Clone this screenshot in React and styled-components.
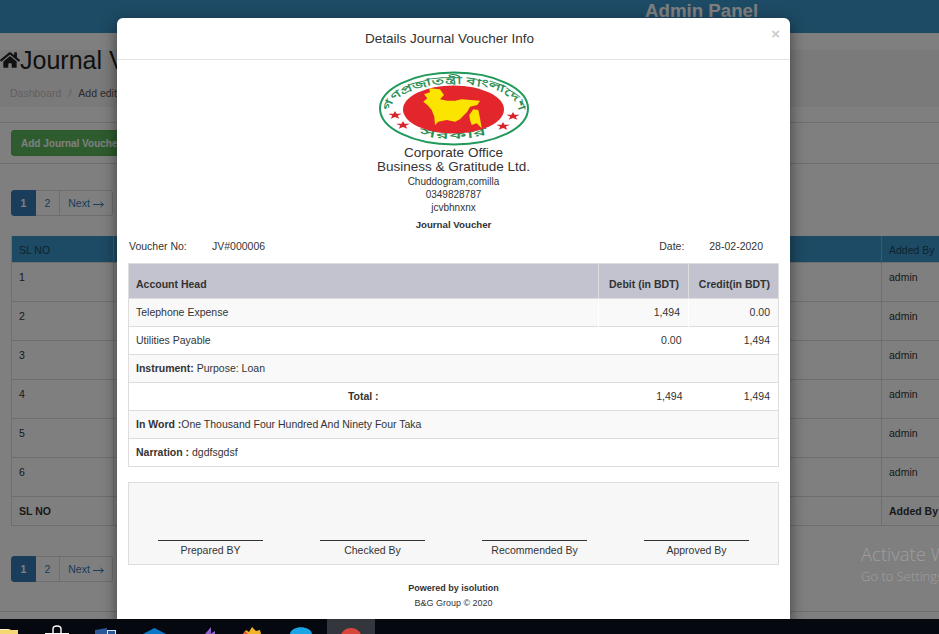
import React from 'react'
import styled, { createGlobalStyle } from 'styled-components'
import { FaHome } from 'react-icons/fa'

const GlobalStyle = createGlobalStyle`
  html, body {
    margin: 0;
    padding: 0;
    background: #fff;
    overflow: hidden;
  }
  * {
    box-sizing: border-box;
  }
`

const Screen = styled.div`
  width: 939px;
  height: 634px;
  display: flex;
  flex-direction: column;
  overflow: hidden;
  font-family: 'Liberation Sans', Arial, sans-serif;
  color: #333;
`
const Viewport = styled.div`
  position: relative;
  flex: 1;
  min-height: 0;
  overflow: hidden;
`
const Page = styled.div`
  width: 100%;
  height: 100%;
  display: flex;
  flex-direction: column;
  background: #fff;
`
const TopBar = styled.header`
  height: 33px;
  flex: none;
  background: #3a95c8;
  padding-left: 645px;
  overflow: hidden;
`
const BrandText = styled.div`
  font-size: 18.7px;
  font-weight: 700;
  line-height: 22px;
  color: #fff;
`
const Strip = styled.div`
  height: 17px;
  flex: none;
  background: #fff;
`
const TitleBand = styled.section`
  height: 57px;
  flex: none;
  background: #f5f5f5;
`
const PageTitle = styled.h1`
  margin: 0;
  display: flex;
  align-items: center;
  font-size: 25px;
  font-weight: 400;
  line-height: 20px;
  height: 20px;
  color: #222;
  white-space: nowrap;
`
const Crumbs = styled.div`
  display: flex;
  gap: 7px;
  margin: 16px 0 0 10px;
  font-size: 10.5px;
  line-height: 14px;
  color: #555;
  white-space: nowrap;
`
const CrumbLink = styled.span`
  color: #c9bdbd;
`
const ActionBar = styled.div`
  height: 42px;
  flex: none;
  margin-top: 15px;
  border-top: 1px solid #ddd;
  border-bottom: 1px solid #ddd;
  padding: 7px 11px 0;
`
const GreenButton = styled.button`
  height: 26px;
  width: 130px;
  padding: 0 9px;
  text-align: left;
  border: 1px solid #58b158;
  border-radius: 3px;
  background: #5cb85c;
  color: #fff;
  font-family: inherit;
  font-size: 10px;
  font-weight: 700;
  white-space: nowrap;
`
const Pager = styled.nav`
  display: flex;
  margin: ${(props) => props.$margin};
  padding-left: 11px;
  height: 26px;
  flex: none;
`
const PageLink = styled.span`
  width: ${(props) => props.$width}px;
  display: flex;
  align-items: center;
  justify-content: center;
  gap: 3px;
  font-size: 10.5px;
  font-weight: ${(props) => (props.$active ? 700 : 400)};
  color: ${(props) => (props.$active ? '#fff' : '#337ab7')};
  background: ${(props) => (props.$active ? '#337ab7' : '#fff')};
  border: 1px solid ${(props) => (props.$active ? '#337ab7' : '#ddd')};
  border-left-width: ${(props) => (props.$active ? 1 : 0)}px;
  border-radius: ${(props) => props.$radius || '0'};
`
const Arrow = styled.svg`
  width: 11px;
  height: 7px;
  margin-top: 2px;
`
const DataTable = styled.div`
  margin-left: 11px;
  width: 960px;
  flex: none;
  border-left: 1px solid #ddd;
`
const DataRow = styled.div`
  display: grid;
  grid-template-columns: 101px 1fr 90px;
  height: ${(props) => props.$height}px;
  background: ${(props) => (props.$head ? '#3a95c8' : 'transparent')};
  color: ${(props) => (props.$head ? '#1c4660' : '#333')};
  border-bottom: 1px solid #ddd;
  font-size: 10.5px;
  font-weight: ${(props) => (props.$bold ? 700 : 400)};
`
const DataCell = styled.div`
  padding: 8px 7px;
  border-left: 1px solid ${(props) => (props.$head ? '#76b6da' : '#ddd')};
  &:first-child {
    border-left: 0;
  }
`
const Activation = styled.div`
  position: absolute;
  left: 861px;
  top: 542px;
  width: 260px;
  font-family: 'Open Sans', sans-serif;
  font-weight: 300;
  color: rgba(255, 255, 255, 0.25);
  white-space: nowrap;
  z-index: 3;
`
const ActivationTitle = styled.div`
  font-size: 18.5px;
  line-height: 23px;
`
const ActivationHint = styled.div`
  font-size: 13px;
  line-height: 22px;
`
const BottomRule = styled.div`
  margin-top: 29px;
  border-top: 1px solid #ddd;
`
const Backdrop = styled.div`
  position: absolute;
  inset: 0;
  background: rgba(0, 0, 0, 0.5);
  z-index: 1;
`
const Modal = styled.div`
  position: absolute;
  left: 117px;
  top: 18px;
  width: 673px;
  height: 620px;
  background: #fff;
  border-radius: 6px;
  box-shadow: 0 5px 15px rgba(0, 0, 0, 0.5);
  z-index: 2;
`
const ModalHeader = styled.div`
  position: relative;
  height: 42px;
  padding-right: 8px;
  border-bottom: 1px solid #e5e5e5;
  display: flex;
  align-items: center;
  justify-content: center;
`
const ModalTitle = styled.h4`
  margin: 0;
  font-size: 13.5px;
  font-weight: 400;
  color: #333;
`
const Close = styled.span`
  position: absolute;
  right: 10px;
  top: 7px;
  font-size: 15px;
  font-weight: 700;
  line-height: 18px;
  color: #ccc;
`
const ModalBody = styled.div`
  padding: 10px 11px 0;
`
const Letterhead = styled.div`
  display: flex;
  flex-direction: column;
  align-items: center;
`
const Logo = styled.svg`
  display: block;
  width: 152px;
  height: 76px;
`
const RingText = styled.text`
  font-family: 'Noto Sans', 'DejaVu Sans', sans-serif;
  font-size: ${(props) => props.$size}px;
  font-weight: 700;
  fill: #2a8f55;
`
const OrgName = styled.div`
  font-size: 13.5px;
  line-height: 14px;
`
const OrgLine = styled.div`
  margin-top: ${(props) => props.$top || 0}px;
  font-size: 10px;
  line-height: 13px;
`
const DocTitle = styled.div`
  margin-top: 4px;
  font-size: 9.7px;
  line-height: 13px;
  font-weight: 700;
`
const MetaRow = styled.div`
  display: flex;
  justify-content: space-between;
  margin-top: 7px;
  height: 25px;
  padding: 0 16px 0 1px;
  font-size: 10.5px;
  line-height: 16px;
`
const MetaPair = styled.div`
  display: flex;
`
const MetaLabel = styled.span`
  width: ${(props) => props.$width}px;
`
const Voucher = styled.table`
  width: 650px;
  border-collapse: collapse;
  table-layout: fixed;
  font-size: 10.5px;
  border: 1px solid #ddd;
  tbody tr:first-child td + td {
    border-left: 1px solid #fff;
  }
`
const HeadCell = styled.th`
  height: 35px;
  padding: 6px ${(props) => props.$right || 8}px 0 7px;
  background: #c2c3cf;
  border: 1px solid #ddd;
  font-weight: 700;
  color: #333;
  text-align: ${(props) => props.$align || 'left'};
`
const Row = styled.tr`
  height: 28px;
  background: ${(props) => (props.$striped ? '#f9f9f9' : '#fff')};
  border-bottom: 1px solid #ddd;
`
const Cell = styled.td`
  padding: 0 ${(props) => props.$right || 8}px 2px 7px;
  color: #333;
  text-align: ${(props) => props.$align || 'left'};
  font-weight: ${(props) => (props.$bold ? 700 : 400)};
`
const Signatures = styled.div`
  margin-top: 15px;
  height: 83px;
  width: 651px;
  display: grid;
  grid-template-columns: repeat(4, 162px);
  align-items: end;
  background: #f7f7f7;
  border: 1px solid #ddd;
  padding: 0 0 7px;
`
const Signature = styled.div`
  width: 105px;
  margin-left: 29px;
  border-top: 1px solid #333;
  padding-top: 3px;
  font-size: 10.5px;
  line-height: 13px;
  text-align: center;
`
const ModalFoot = styled.footer`
  margin-top: 16px;
  text-align: center;
  font-size: 9px;
  line-height: 15px;
`
const Strong = styled.span`
  font-weight: 700;
`
const Taskbar = styled.div`
  height: 15px;
  flex: none;
  display: flex;
  margin-left: -15px;
  background: #05080f;
  overflow: hidden;
  position: relative;
  z-index: 4;
`
const TaskSlot = styled.div`
  width: 48px;
  height: 15px;
  margin-left: ${(props) => props.$gap || 0}px;
  flex: none;
  background: ${(props) => (props.$active ? '#33373d' : 'transparent')};
`
const TaskIcon = styled.svg`
  display: block;
  width: 48px;
  height: 15px;
`

const Star = ({ x, y }) => (
  <polygon
    transform={`translate(${x} ${y}) scale(1.35 1)`}
    fill="#d8232a"
    points="0,-4 1.1,-1.2 5,-1.2 2,0.7 3.2,3.8 0,1.9 -3.2,3.8 -2,0.7 -5,-1.2 -1.1,-1.2"
  />
)

const Emblem = () => (
  <Logo viewBox="0 0 152 76">
    <defs>
      <path id="ringTop" d="M12 40 A64 26 0 0 1 140 40" />
      <path id="ringBottom" d="M41 64 Q76 73 111 64" />
    </defs>
    <ellipse cx="76" cy="38.5" rx="74" ry="36" fill="#fff" stroke="#1f9a5b" strokeWidth="2" />
    <RingText $size={10}>
      <textPath href="#ringTop" startOffset="50%" textAnchor="middle" textLength="150" lengthAdjust="spacingAndGlyphs">গণপ্রজাতন্ত্রী বাংলাদেশ</textPath>
    </RingText>
    <RingText $size={10}>
      <textPath href="#ringBottom" startOffset="50%" textAnchor="middle" textLength="68" lengthAdjust="spacingAndGlyphs">সরকার</textPath>
    </RingText>
    <ellipse cx="75.5" cy="39.5" rx="50.5" ry="24" fill="#e3262b" />
    <path
      fill="#fbe400"
      d="M45.3 31.7 L49.3 28.3 L46 24.3 L52 22.3 L51.3 18.3 L62 19.3 L66 25 L62 29.3 L69.3 30.7 L77 30.7 L83.7 29.3 L102 30.7 L99.3 35 L92 36.7 L89.3 41.7 L86 45 L82 49.3 L77 51.7 L68.7 50 L60.3 51.7 L57 55 L56.3 46.7 L53.7 40 L49.3 35 Z"
    />
    <path fill="#fbe400" d="M91.3 45 L95.3 39.3 L100.3 40 L102 48.3 L103.7 58.3 L98.7 53.3 L93.7 55 L92 50 Z" />
    <Star x={17} y={45} />
    <Star x={25} y={55} />
    <Star x={135} y={46} />
    <Star x={125} y={56} />
  </Logo>
)

const Pagination = ({ margin }) => (
  <Pager $margin={margin}>
    <PageLink $active $width={25} $radius="3px 0 0 3px">1</PageLink>
    <PageLink $width={24}>2</PageLink>
    <PageLink $width={53} $radius="0 3px 3px 0">
      Next
      <Arrow viewBox="0 0 11 7">
        <path d="M0 3.5 H10 M7.5 1 L10.5 3.5 L7.5 6" fill="none" stroke="currentColor" strokeWidth="1" />
      </Arrow>
    </PageLink>
  </Pager>
)

const TASK_ICONS = [
  <g key="folder">
    <path d="M15 10 H24 L26 11 H33 V15 H15 Z" fill="#f5d774" />
    <path d="M15 10 H23 V11 H15 Z" fill="#fff3c4" />
  </g>,
  <g key="store">
    <path d="M20 14 V10 C20 6 28 6 28 10 V14" fill="none" stroke="#fff" strokeWidth="1.4" />
    <rect x="12" y="14" width="24" height="1" fill="#fff" />
  </g>,
  <g key="doc">
    <path d="M14 11 L26 9 V15 H14 Z" fill="#2b5797" />
    <rect x="26" y="11" width="9" height="4" fill="#dfe7f2" />
    <rect x="27" y="12" width="7" height="3" fill="#2b5797" />
  </g>,
  <path key="box" d="M14 15 L25.5 9 L37 15 Z" fill="#0a78c8" />,
  <path key="studio" d="M28 15 L34 8 L34 15 Z M33 15 L38 15 L38 12 Z" fill="#8f63c9" />,
  <g key="flame">
    <path d="M18 15 L21 11 L24 13 L27 8 L31 12 L35 11 L36 15 Z" fill="#f0b429" />
    <path d="M18 15 L20 12 L23 15 Z" fill="#e2572b" />
  </g>,
  <path key="call" d="M17 15 C18 6 38 6 39 15 Z" fill="#1aa5e6" />,
]

const App = () => {
  const rows = [1, 2, 3, 4, 5, 6]
  return (
    <Screen>
      <GlobalStyle />
      <Viewport>
        <Page>
          <TopBar>
            <BrandText>Admin Panel</BrandText>
          </TopBar>
          <Strip />
          <TitleBand>
            <PageTitle><FaHome size={20} />Journal Voucher</PageTitle>
            <Crumbs>
              <CrumbLink>Dashboard</CrumbLink>
              <CrumbLink>/</CrumbLink>
              <span>Add edit Journal Voucher</span>
            </Crumbs>
          </TitleBand>
          <ActionBar>
            <GreenButton>Add Journal Voucher</GreenButton>
          </ActionBar>
          <Pagination margin="26px 0 20px" />
          <DataTable>
            <DataRow $head $height={27}>
              <DataCell $head>SL NO</DataCell>
              <DataCell $head />
              <DataCell $head>Added By</DataCell>
            </DataRow>
            {rows.map((n) => (
              <DataRow key={n} $height={39}>
                <DataCell>{n}</DataCell>
                <DataCell />
                <DataCell>admin</DataCell>
              </DataRow>
            ))}
            <DataRow $bold $height={29}>
              <DataCell>SL NO</DataCell>
              <DataCell />
              <DataCell>Added By</DataCell>
            </DataRow>
          </DataTable>
          <Pagination margin="30px 0 0" />
          <BottomRule />
        </Page>
        <Backdrop />
        <Activation>
          <ActivationTitle>Activate Windows</ActivationTitle>
          <ActivationHint>Go to Settings to activate Windows.</ActivationHint>
        </Activation>
        <Modal>
          <ModalHeader>
            <ModalTitle>Details Journal Voucher Info</ModalTitle>
            <Close>×</Close>
          </ModalHeader>
          <ModalBody>
            <Letterhead>
              <Emblem />
              <OrgName>Corporate Office</OrgName>
              <OrgName>Business &amp; Gratitude Ltd.</OrgName>
              <OrgLine $top={1}>Chuddogram,comilla</OrgLine>
              <OrgLine>0349828787</OrgLine>
              <OrgLine>jcvbhnxnx</OrgLine>
              <DocTitle>Journal Voucher</DocTitle>
            </Letterhead>
            <MetaRow>
              <MetaPair><MetaLabel $width={83}>Voucher No:</MetaLabel><span>JV#000006</span></MetaPair>
              <MetaPair><MetaLabel $width={50}>Date:</MetaLabel><span>28-02-2020</span></MetaPair>
            </MetaRow>
            <Voucher>
              <colgroup>
                <col style={{ width: 470 }} />
                <col style={{ width: 90 }} />
                <col style={{ width: 90 }} />
              </colgroup>
              <thead>
                <tr>
                  <HeadCell>Account Head</HeadCell>
                  <HeadCell $align="right" $right={9}>Debit (in BDT)</HeadCell>
                  <HeadCell $align="right">Credit(in BDT)</HeadCell>
                </tr>
              </thead>
              <tbody>
                <Row $striped>
                  <Cell>Telephone Expense</Cell>
                  <Cell $align="right">1,494</Cell>
                  <Cell $align="right">0.00</Cell>
                </Row>
                <Row>
                  <Cell>Utilities Payable</Cell>
                  <Cell $align="right" $right={7}>0.00</Cell>
                  <Cell $align="right">1,494</Cell>
                </Row>
                <Row $striped>
                  <Cell><Strong>Instrument:</Strong> Purpose: Loan</Cell>
                  <Cell />
                  <Cell />
                </Row>
                <Row>
                  <Cell $align="center" $bold>Total :</Cell>
                  <Cell $align="right" $right={6}>1,494</Cell>
                  <Cell $align="right">1,494</Cell>
                </Row>
                <Row $striped>
                  <Cell colSpan={3}><Strong>In Word :</Strong>One Thousand Four Hundred And Ninety Four Taka</Cell>
                </Row>
                <Row>
                  <Cell colSpan={3}><Strong>Narration :</Strong> dgdfsgdsf</Cell>
                </Row>
              </tbody>
            </Voucher>
            <Signatures>
              <Signature>Prepared BY</Signature>
              <Signature>Checked By</Signature>
              <Signature>Recommended By</Signature>
              <Signature>Approved By</Signature>
            </Signatures>
            <ModalFoot>
              <Strong>Powered by isolution</Strong>
              <div>B&amp;G Group © 2020</div>
            </ModalFoot>
          </ModalBody>
        </Modal>
      </Viewport>
      <Taskbar>
        {TASK_ICONS.map((icon) => (
          <TaskSlot key={icon.key}>
            <TaskIcon viewBox="0 0 48 15">{icon}</TaskIcon>
          </TaskSlot>
        ))}
        <TaskSlot $active $gap={6}>
          <TaskIcon viewBox="0 0 48 15">
            <circle cx="24" cy="20" r="11" fill="#d9473c" />
          </TaskIcon>
        </TaskSlot>
      </Taskbar>
    </Screen>
  )
}

export default App
